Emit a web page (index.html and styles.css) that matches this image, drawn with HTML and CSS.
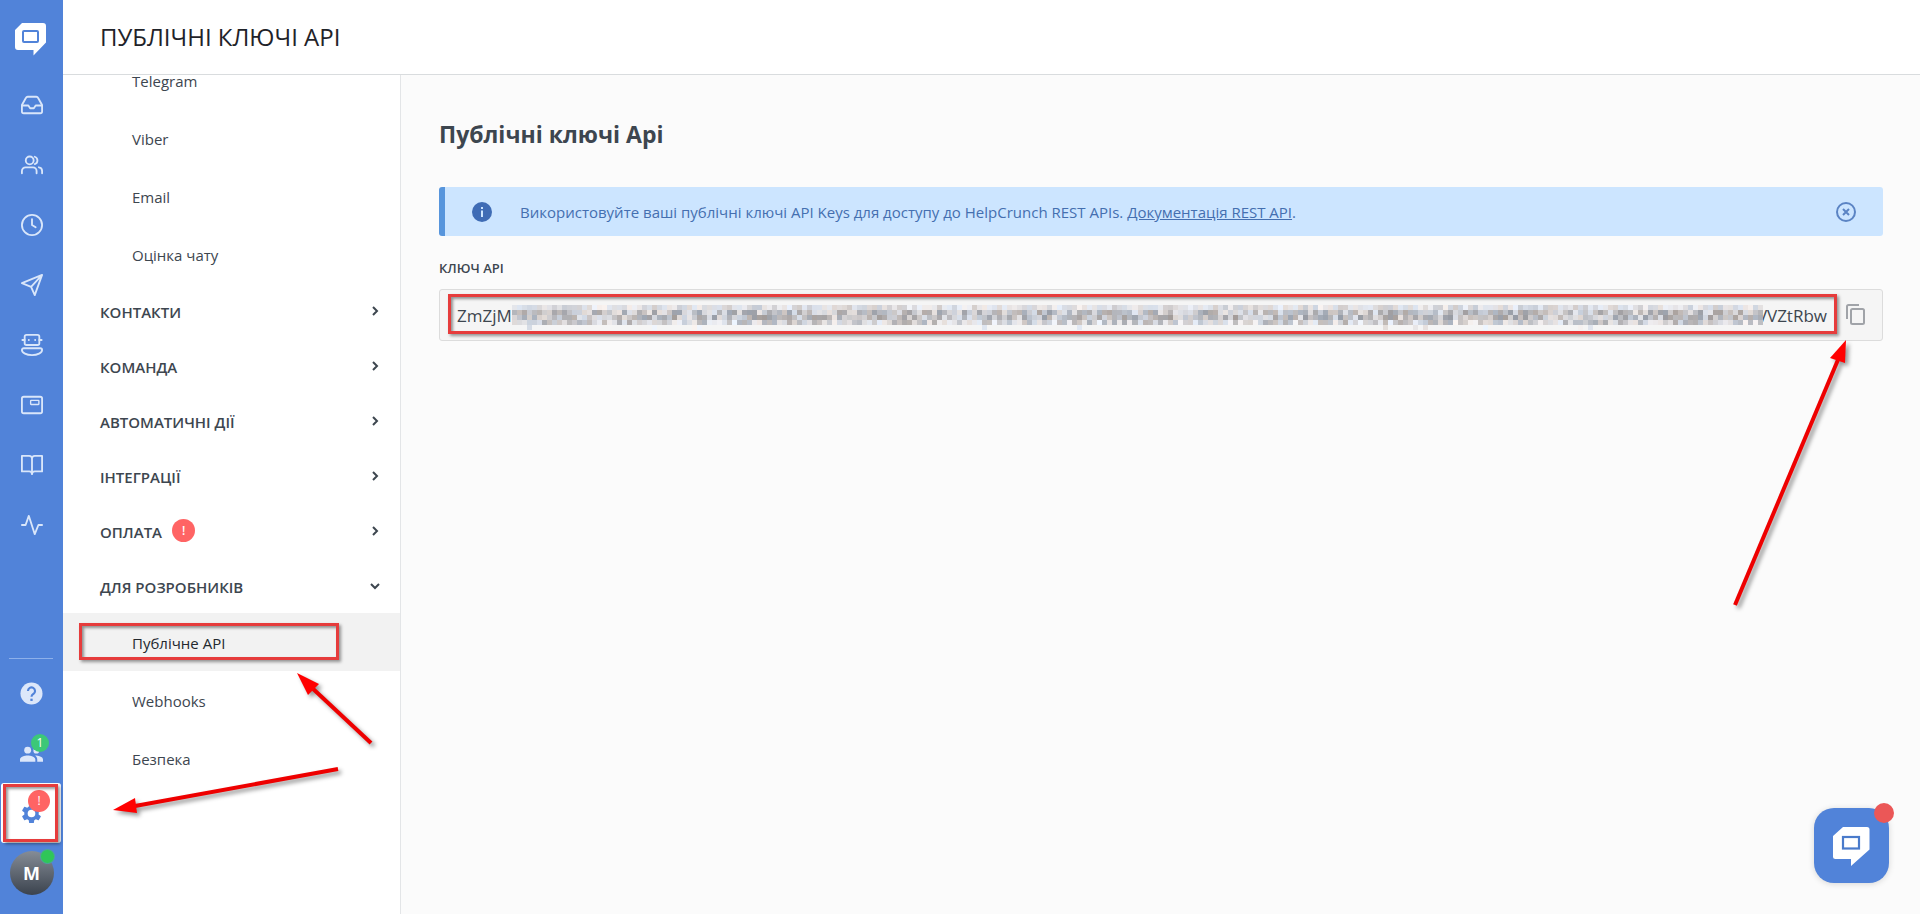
FILE: index.html
```html
<!DOCTYPE html>
<html lang="uk">
<head>
<meta charset="utf-8">
<title>Публічні ключі API</title>
<link rel="stylesheet" href="styles.css">
</head>
<body>
<div class="app">
  <nav class="rail" aria-label="Головна навігація">
    <a class="rail-logo" href="#" aria-label="HelpCrunch">
      <svg width="32" height="34" viewBox="0 0 32 34"><path d="M7 1h21a3 3 0 0 1 3 3v16.500L18.500 33.500V28H3a3 3 0 0 1-3-3V8z" fill="#fff"/><rect x="8" y="9" width="15" height="11" rx="1" fill="none" stroke="#5183d9" stroke-width="2"/></svg>
    </a>
    <a class="rail-item" href="#" aria-label="Чати"><svg class="line" viewBox="0 0 24 24"><path d="M22.500 12.500H16l-2 3h-4l-2-3H1.500"/><path d="M5.450 4.110L1 12v7a2 2 0 0 0 2 2h18a2 2 0 0 0 2-2v-7l-4.450-7.890A2 2 0 0 0 16.760 3H7.240a2 2 0 0 0-1.790 1.110z"/></svg></a>
    <a class="rail-item" href="#" aria-label="Контакти"><svg class="line" viewBox="0 0 24 24"><circle cx="9.500" cy="7" r="4.300"/><path d="M15 3a4.200 4.200 0 0 1 0 8M1 21v-2.500a4 4 0 0 1 4-4h8a4 4 0 0 1 4 4V21M19.500 14.500A4 4 0 0 1 23 18.500V21"/></svg></a>
    <a class="rail-item" href="#" aria-label="Історія"><svg class="line" viewBox="0 0 24 24"><circle cx="12" cy="12" r="11"/><path d="M12 5.500V12l4 2.500"/></svg></a>
    <a class="rail-item" href="#" aria-label="Розсилки"><svg class="line" viewBox="0 0 24 24"><path d="M23 1L15 23l-4-9-10-4zM23 1L11 14"/></svg></a>
    <a class="rail-item" href="#" aria-label="Чат-боти"><svg class="line" viewBox="0 0 24 24"><rect x="4" y="1" width="16" height="11" rx="2"/><path d="M1.500 6.500H4M20 6.500h2.500M8.500 6.500h.100M15.400 6.500h.100M3 15.500h18a2 2 0 0 1 2 2c0 3-5 5.500-11 5.500S1 20.500 1 17.500a2 2 0 0 1 2-2z"/></svg></a>
    <a class="rail-item" href="#" aria-label="Попапи"><svg class="line" viewBox="0 0 24 24"><rect x="1" y="3" width="22" height="18" rx="2"/><rect x="10.500" y="7" width="9" height="4.500" rx=".5" stroke-width="1.500"/></svg></a>
    <a class="rail-item" href="#" aria-label="База знань"><svg class="line" viewBox="0 0 24 24"><path d="M1 2h8a3 3 0 0 1 3 3v17a3 3 0 0 0-3-3H1zM23 2h-8a3 3 0 0 0-3 3v17a3 3 0 0 1 3-3h8z"/></svg></a>
    <a class="rail-item" href="#" aria-label="Звіти"><svg class="line" viewBox="0 0 24 24"><path d="M23 12h-4l-4 10L8.500 2 5 12H1"/></svg></a>
    <div class="rail-bottom">
      <a class="rail-item" href="#" aria-label="Допомога"><svg class="solid" viewBox="0 0 24 24"><circle cx="12" cy="12" r="11.500"/><path d="M8.300 9.300a3.700 3.700 0 1 1 5.600 3.200c-1.300.9-1.900 1.500-1.900 3" fill="none" stroke="#5183d9" stroke-width="2.200"/><rect x="10.800" y="17.400" width="2.400" height="2.400" fill="#5183d9"/></svg></a>
      <a class="rail-item" href="#" aria-label="Команда"><svg class="solid" viewBox="0 0 24 24"><circle cx="8" cy="8.500" r="3.600"/><circle cx="17" cy="9" r="3"/><path d="M0 20.500v-2.300c0-2.800 5-4.200 8-4.200s8 1.400 8 4.200v2.300zM18 20.500v-2.300c0-1.700-.9-3-2.300-4 3.300 0 8.300 1.200 8.300 4v2.300z"/></svg><span class="badge badge-green">1</span></a>
      <a class="rail-item rail-active" href="#" aria-label="Налаштування"><svg class="gear" viewBox="0 0 24 24"><path fill-rule="evenodd" d="M19.430 12.980c.04-.32.07-.64.07-.98s-.03-.66-.07-.98l2.110-1.650a.5.500 0 0 0 .12-.64l-2-3.460a.5.500 0 0 0-.61-.22l-2.490 1a7.300 7.300 0 0 0-1.690-.98l-.38-2.650A.490.490 0 0 0 14 2h-4a.490.490 0 0 0-.49.420l-.38 2.650c-.61.250-1.170.590-1.690.980l-2.490-1a.490.490 0 0 0-.61.220l-2 3.460a.490.490 0 0 0 .12.640l2.110 1.650c-.04.320-.07.650-.07.980s.03.660.07.980l-2.110 1.650a.5.500 0 0 0-.12.640l2 3.460c.12.220.39.300.61.220l2.490-1c.52.400 1.080.730 1.690.980l.38 2.650c.03.240.24.420.49.420h4c.25 0 .46-.18.490-.42l.38-2.650c.61-.25 1.170-.59 1.690-.98l2.490 1c.23.090.49 0 .61-.22l2-3.460a.5.500 0 0 0-.12-.64zM12 16a4 4 0 1 1 0-8 4 4 0 0 1 0 8z"/></svg><span class="badge badge-red">!</span><span class="mark mark-settings"></span></a>
      <a class="rail-item" href="#" aria-label="Профіль"><span class="avatar">M</span><span class="online"></span></a>
    </div>
  </nav>

  <div class="page">
    <header class="topbar"><h1 class="topbar-title">ПУБЛІЧНІ КЛЮЧІ API</h1></header>
    <div class="columns">
      <aside class="menu">
        <div class="menu-list">
          <a class="item" href="#">Telegram</a>
          <a class="item" href="#">Viber</a>
          <a class="item" href="#">Email</a>
          <a class="item" href="#">Оцінка чату</a>
          <button class="group"><span class="group-name">КОНТАКТИ</span><svg class="chev" viewBox="0 0 12 12"><path d="M4 2l4 4-4 4"/></svg></button>
          <button class="group"><span class="group-name">КОМАНДА</span><svg class="chev" viewBox="0 0 12 12"><path d="M4 2l4 4-4 4"/></svg></button>
          <button class="group"><span class="group-name">АВТОМАТИЧНІ ДІЇ</span><svg class="chev" viewBox="0 0 12 12"><path d="M4 2l4 4-4 4"/></svg></button>
          <button class="group"><span class="group-name">ІНТЕГРАЦІЇ</span><svg class="chev" viewBox="0 0 12 12"><path d="M4 2l4 4-4 4"/></svg></button>
          <button class="group"><span class="group-name">ОПЛАТА</span><span class="alert">!</span><svg class="chev" viewBox="0 0 12 12"><path d="M4 2l4 4-4 4"/></svg></button>
          <button class="group"><span class="group-name">ДЛЯ РОЗРОБНИКІВ</span><svg class="chev" viewBox="0 0 12 12"><path d="M2 4l4 4 4-4"/></svg></button>
          <a class="item item-active" href="#">Публічне API<span class="mark mark-item"></span></a>
          <a class="item" href="#">Webhooks</a>
          <a class="item" href="#">Безпека</a>
        </div>
      </aside>
      <main class="content">
        <h2 class="heading">Публічні ключі Api</h2>
        <div class="notice">
          <svg class="notice-icon" viewBox="0 0 20 20"><circle cx="10" cy="10" r="10" fill="#3f6cb5"/><path d="M9 5h2v2H9zM9 8.500h2V15H9z" fill="#cce5ff"/></svg>
          <p class="notice-text">Використовуйте ваші публічні ключі API Keys для доступу до HelpCrunch REST APIs. <a class="doc-link" href="#">Документація REST API</a>.</p>
          <button class="icon-button" aria-label="Закрити"><svg width="20" height="20" viewBox="0 0 20 20" fill="none" stroke="#5b84c4" stroke-width="2"><circle cx="10" cy="10" r="9"/><path d="M7 7l6 6M13 7l-6 6"/></svg></button>
        </div>
        <div class="label" id="key-label">КЛЮЧ API</div>
        <div class="key-box">
          <div class="key" aria-labelledby="key-label">
            <span>ZmZjM</span>
            <canvas class="mosaic" id="mosaic" width="250" height="5"></canvas>
            <span class="key-end">VVZtRbw</span>
            <span class="mark mark-key"></span>
          </div>
          <button class="icon-button" aria-label="Копіювати"><svg width="20" height="22" viewBox="0 0 20 22" fill="none" stroke="#a0a3a8" stroke-width="2"><path d="M1 15V2.500A1.500 1.500 0 0 1 2.500 1H13"/><rect x="5" y="5" width="13" height="15" rx="1.500"/></svg></button>
          <svg class="arrow arrow-copy" width="130" height="280" viewBox="0 0 130 280"><path class="shaft" d="M10 270L115 20"/><path class="head" d="M121 5l-16 18 15 5z"/></svg>
        </div>
      </main>
    </div>
  </div>

  <svg class="arrow arrow-settings" width="240" height="60" viewBox="0 0 240 60"><path class="shaft" d="M228 9L25 46"/><path class="head" d="M3 50l22-12 2 15z"/></svg>
  <svg class="arrow arrow-item" width="90" height="90" viewBox="0 0 90 90"><path class="shaft" d="M77 73L16 16"/><path class="head" d="M3 3l22 11-11 11z"/></svg>

  <button class="chat" aria-label="Відкрити чат">
    <svg width="37" height="39" viewBox="0 0 37 39"><path d="M10 0h24a2.500 2.500 0 0 1 2.500 2.500V22.500L18 39v-7H2.500A2.500 2.500 0 0 1 0 29.500V9z" fill="#fff"/><rect x="10" y="10" width="16" height="11.500" fill="none" stroke="#4a7bcb" stroke-width="2.200"/></svg>
    <span class="chat-dot"></span>
  </button>
</div>
<script src="mosaic.js"></script>
</body>
</html>
```

FILE: styles.css
```css
* { box-sizing: border-box; }
body { margin: 0; font-family: "Open Sans", "Noto Sans", sans-serif; color: #3d464f; background: #fff; }
a { color: inherit; text-decoration: none; }
button { font: inherit; color: inherit; border: 0; background: none; padding: 0; cursor: pointer; }
h1, h2, p { margin: 0; }

.app { position: relative; display: flex; height: 100vh; overflow: hidden; }

.rail { width: 63px; flex: none; display: flex; flex-direction: column; background: #5183d9; padding-bottom: 11px; }
.rail-logo { height: 75px; display: flex; align-items: center; justify-content: center; padding: 3px 2px 0 0; }
.rail-item { position: relative; height: 60px; display: flex; align-items: center; justify-content: center; }
.line { width: 22px; height: 22px; fill: none; stroke: #d9e6fa; stroke-width: 2; stroke-linecap: round; stroke-linejoin: round; }
.solid { width: 23px; height: 23px; fill: #dce7fa; }
.gear { width: 23px; height: 23px; fill: #5183d9; }
.rail-bottom { position: relative; margin-top: auto; padding-top: 5px; }
.rail-bottom::before { content: ""; position: absolute; top: 0; left: 9px; right: 10px; height: 1px; background: #8db0ea; }
.rail-active { background: #fff; margin: 0 2px 0 1px; border-radius: 3px; }
.badge { position: absolute; display: flex; align-items: center; justify-content: center; border-radius: 50%; color: #fff; font-size: 12px; line-height: 12px; }
.badge-green { width: 18px; height: 18px; left: 31px; top: 11px; background: #3cc878; }
.badge-red { width: 22px; height: 22px; left: 27px; top: 7px; background: #ff6464; }
.avatar { width: 44px; height: 44px; border-radius: 50%; background: linear-gradient(#858c96, #3b434e); color: #fff; font-size: 18px; font-weight: 700; line-height: 44px; text-align: center; }
.online { position: absolute; left: 40px; top: 6px; width: 15px; height: 15px; border: 1px solid #4fa3a0; border-radius: 50%; background: #2fc659; }

.page { flex: 1; min-width: 0; display: flex; flex-direction: column; }
.topbar { height: 75px; flex: none; display: flex; align-items: center; padding-left: 37px; border-bottom: 1px solid #d9dcde; }
.topbar-title { font-size: 24px; line-height: 32px; font-weight: 400; color: #1f2329; }
.columns { flex: 1; min-height: 0; display: flex; }

.menu { width: 338px; flex: none; overflow: hidden; border-right: 1px solid #e3e5e7; }
.menu-list { display: flex; flex-direction: column; margin-top: -24px; }
.item { position: relative; height: 58px; flex: none; padding: 2px 0 0 69px; font-size: 15px; line-height: 56px; }
.item-active { background: #f2f2f2; color: #23282e; }
.group { height: 55px; display: flex; align-items: center; padding: 0 19px 0 37px; font-size: 15px; font-weight: 600; text-align: left; }
.group-name { padding-top: 2px; }
.chev { width: 12px; height: 12px; margin-left: auto; fill: none; stroke: #3d464f; stroke-width: 2; }
.alert { width: 23px; height: 23px; margin-left: 10px; border-radius: 50%; background: #ff6464; color: #fff; font-size: 12px; line-height: 23px; text-align: center; }

.content { flex: 1; min-width: 0; background: #fbfbfb; padding: 43px 37px 0 38px; }
.heading { font-size: 23px; line-height: 32px; font-weight: 700; }
.notice { display: flex; align-items: center; height: 49px; margin-top: 37px; padding: 0 27px; border-left: 6px solid #5795dc; border-radius: 3px; background: #cce5ff; color: #446fb0; }
.notice-icon { width: 20px; height: 20px; flex: none; }
.notice-text { flex: 1; padding: 1px 0 0 28px; font-size: 15px; line-height: 22px; }
.doc-link { text-decoration: underline; }
.icon-button { display: flex; flex: none; }
.label { margin-top: 22px; font-size: 13px; line-height: 20px; font-weight: 600; }
.key-box { position: relative; display: flex; align-items: center; height: 52px; margin-top: 11px; padding-right: 16px; border: 1px solid #dcdcdc; border-radius: 3px; background: #f5f5f5; }
.key { position: relative; flex: 1; min-width: 0; height: 50px; display: flex; align-items: center; margin-right: 9px; padding: 0 10px 0 17px; font-size: 17px; white-space: nowrap; }
.mosaic { position: relative; z-index: 1; flex: 1; min-width: 0; height: 25px; margin: 4px -6px 0 0; background: #f5f5f5; image-rendering: pixelated; }
.key-end { flex: none; }

.mark { position: absolute; border: 3px solid #e63c3c; box-shadow: 2px 2px 3px rgba(0,0,0,.4), inset 2px 2px 3px rgba(0,0,0,.4); pointer-events: none; }
.mark-settings { left: 2px; top: 1px; width: 55px; height: 58px; }
.mark-item { left: 16px; top: 10px; width: 260px; height: 37px; }
.mark-key { left: 8px; right: 0; top: 4px; height: 40px; }
.arrow { position: absolute; pointer-events: none; filter: drop-shadow(3px 3px 2px rgba(0,0,0,.4)); overflow: visible; }
.shaft { fill: none; stroke: #ee0000; stroke-width: 4; }
.head { fill: #ff0000; }
.arrow-copy { right: 27px; top: 45px; }
.arrow-settings { left: 110px; top: 760px; }
.arrow-item { left: 294px; top: 670px; }

.chat { position: absolute; right: 31px; bottom: 31px; width: 75px; height: 75px; display: flex; align-items: center; justify-content: center; padding: 2px 0 0 0; border-radius: 20px; background: #5183d9; box-shadow: 0 1px 6px rgba(0,0,0,.15); }
.chat-dot { position: absolute; right: -5px; top: -5px; width: 20px; height: 20px; border-radius: 50%; background: #eb5757; }
```

FILE: mosaic.js
```js
// Fills the hidden part of the key with muted blocks.
const ctx = document.getElementById('mosaic').getContext('2d');
let seed = 11;
function rnd() {
  seed = (seed * 1103515245 + 12345) % 2147483648;
  return seed / 2147483648;
}
const base = [224, 196, 192, 210, 236];
for (let x = 0; x < 250; x++) {
  for (let y = 0; y < 5; y++) {
    const r = rnd(), t = rnd(), show = rnd();
    if (y === 4 && show > 0.06) continue;
    const v = Math.min(245, base[y] + (r - 0.5) * (y === 0 || y === 4 ? 40 : 74));
    const tint = (t - 0.5) * 16;
    ctx.fillStyle = `rgb(${v + tint | 0},${v | 0},${v + 4 - tint | 0})`;
    ctx.fillRect(x, y, 1, 1);
  }
}
```
